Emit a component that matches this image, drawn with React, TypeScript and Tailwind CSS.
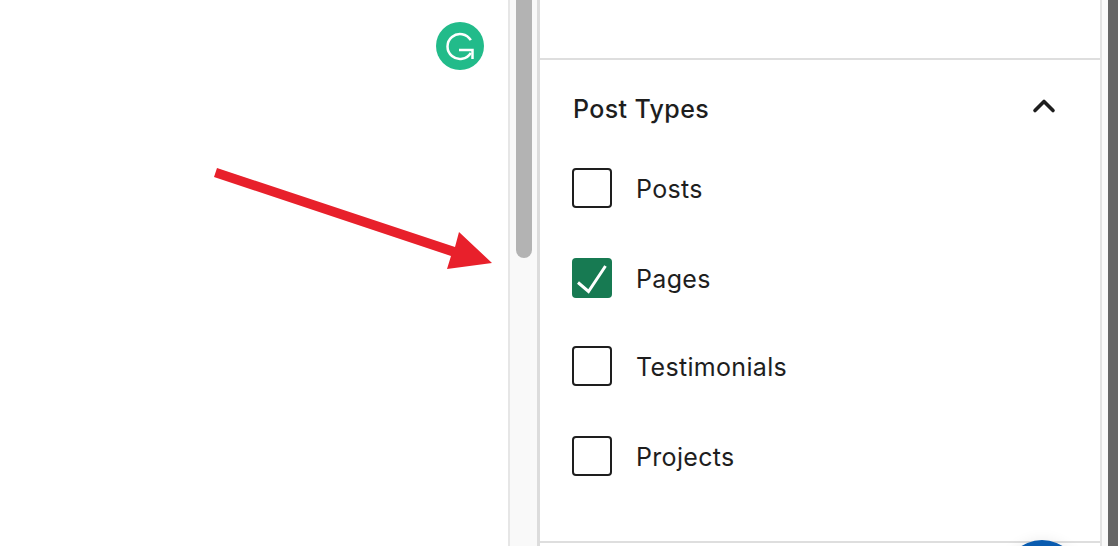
import { ChevronUp } from 'lucide-react'

const postTypes = [
  { label: 'Posts', checked: false },
  { label: 'Pages', checked: true },
  { label: 'Testimonials', checked: false },
  { label: 'Projects', checked: false }
]

function TypeRow({ label, checked }: { label: string; checked: boolean }) {
  return (
    <div className="flex h-10 items-center gap-[24px]">
      {checked ? (
        <span className="flex h-10 w-10 items-center justify-center rounded-[4px] bg-[#177a52]">
          <svg width="40" height="40" viewBox="0 0 40 40" fill="none">
            <path d="M6 24.500 L16.500 33.500 L33.500 8" stroke="#fff" strokeWidth="3" />
          </svg>
        </span>
      ) : (
        <span className="h-10 w-10 rounded-[4px] border-2 border-[#1e1e1e] bg-white" />
      )}
      <span className="pt-[2px] text-[25px] leading-none tracking-[0.32px] text-[#1e1e1e]">{label}</span>
    </div>
  )
}

export default function App() {
  return (
    <div className="relative flex h-[546px] w-[1118px] overflow-hidden bg-white font-['Inter',sans-serif]">
      <div className="relative w-[508px] shrink-0">
        <div className="absolute left-[436px] top-[22px] flex h-12 w-12 items-center justify-center rounded-full bg-[#22bb8a]">
          <svg width="48" height="48" viewBox="0 0 48 48" fill="none">
            <path d="M34.800 18.200A12.500 12.500 0 1 0 34.800 30.800" stroke="#fff" strokeWidth="2.500" />
            <path d="M23 28H36.500V37" stroke="#fff" strokeWidth="2.500" />
          </svg>
        </div>
        <svg className="absolute left-[210px] top-[165px]" width="290" height="110" viewBox="0 0 290 110">
          <path d="M7 3 L4 12 L241 91 L237 104 L282 98 L249 67 L245 82 Z" fill="#e8202b" />
        </svg>
      </div>

      <div className="flex w-[32px] shrink-0 border-l-2 border-r-[3px] border-l-[#e6e6e6] border-r-[#dcdcdc] bg-[#f9f9f9] pl-[6px]">
        <div className="h-[258px] w-4 rounded-b-full bg-[#b3b3b3]" />
      </div>

      <div className="flex w-[562px] shrink-0 flex-col border-r-2 border-[#e2e2e2]">
        <div className="h-[60px] border-b-2 border-[#dedede]" />
        <section className="h-[483px] border-b-2 border-[#dedede] px-[32px]">
          <div className="flex h-[100px] items-center justify-between">
            <h2 className="ml-px text-[25px] font-medium tracking-[0.37px] text-[#1e1e1e]">Post Types</h2>
            <ChevronUp className="mr-[6px] -mt-[8px] h-9 w-9 text-[#1e1e1e]" strokeWidth={2.4} />
          </div>
          <div className="mt-[8px] flex flex-col gap-[50px] [&>*:nth-child(3)]:-mt-[2px]">
            {postTypes.map((t) => (
              <TypeRow key={t.label} label={t.label} checked={t.checked} />
            ))}
          </div>
        </section>
      </div>

      <div className="w-[6px] shrink-0 bg-[#f9f9f9]" />
      <div className="flex-1 bg-[#666666]" />

      <div className="absolute left-[1004px] top-[540px] h-[76px] w-[76px] rounded-full bg-[#0a5cb0] shadow-[0_0_14px_rgba(0,0,0,0.08)]" />
    </div>
  )
}
